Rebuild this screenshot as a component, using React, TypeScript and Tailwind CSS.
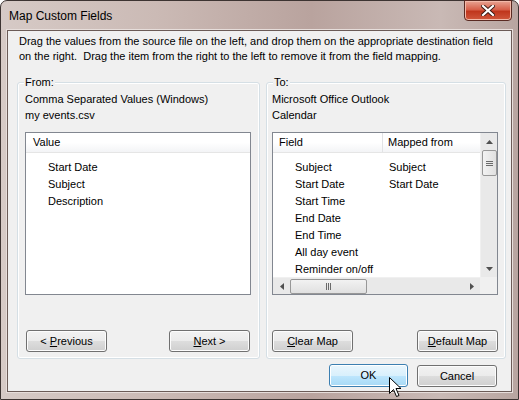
import React from "react";

const font = { fontFamily: '"Liberation Sans", Arial, sans-serif' };

function Btn({ children, className = "", primary = false }: { children: React.ReactNode; className?: string; primary?: boolean }) {
  return (
    <div
      className={
        "flex items-center justify-center rounded-[3px] border text-[11px] text-black " +
        (primary
          ? "border-[#3c7fb1] bg-[linear-gradient(#eaf6fd_0%,#d9f0fc_50%,#bee6fd_51%,#a7d9f5_100%)] shadow-[inset_0_0_0_1px_#fff]"
          : "border-[#707070] bg-[linear-gradient(#f2f2f2_0%,#ebebeb_50%,#dddddd_51%,#cfcfcf_100%)] shadow-[inset_0_0_0_1px_#fcfcfc]") +
        " " +
        className
      }
    >
      <span>{children}</span>
    </div>
  );
}

function GroupBox({ label, className = "", children }: { label: string; className?: string; children: React.ReactNode }) {
  return (
    <div className={"relative flex flex-col rounded-[3px] border border-[#d5dfe5] shadow-[inset_0_0_0_1px_#fff] " + className}>
      <span className="absolute -top-[9px] left-[6px] bg-[#f0f0f0] px-[1px] leading-[16px]">{label}</span>
      {children}
    </div>
  );
}

const fields = [
  ["Subject", "Subject"],
  ["Start Date", "Start Date"],
  ["Start Time", ""],
  ["End Date", ""],
  ["End Time", ""],
  ["All day event", ""],
  ["Reminder on/off", ""],
];

export default function App() {
  return (
    <div className="h-[400px] w-[519px] overflow-hidden bg-white" style={font}>
      <div className="relative flex h-[400px] w-[519px] flex-col rounded-t-[7px] border border-[#3d3432] bg-[linear-gradient(90deg,#d6cac6_0%,#cbbab5_30%,#b9a39e_60%,#c9b9b5_85%,#b8a5a0_100%)]">
        {/* title bar */}
        <div className="flex h-[29px] shrink-0 items-center pl-[8px] text-[12px] text-black">Map Custom Fields</div>
        <div className="absolute right-[6px] top-[-1px] flex h-[21px] w-[48px] items-center justify-center rounded-b-[4px] border border-[#5a2a22] bg-[linear-gradient(#e8a493_0%,#d7604a_45%,#c0361d_55%,#d0573c_100%)] shadow-[inset_0_0_0_1px_#f2b9a9]">
          <svg width="14" height="11" viewBox="0 0 14 11">
            <path d="M2 1 L12 10 M12 1 L2 10" stroke="#3a1a14" strokeWidth="4" strokeLinecap="square" />
            <path d="M2 1 L12 10 M12 1 L2 10" stroke="#ffffff" strokeWidth="2.2" strokeLinecap="square" />
          </svg>
        </div>

        {/* client area */}
        <div className="ml-[6px] mr-[6px] flex h-[362px] flex-col border border-[#6b5b57] bg-[#f0f0f0] text-[11px] text-black shadow-[0_0_0_1px_#e7dedb]">
          <div className="pl-[11px] pr-[8px] pt-[3px] leading-[15px]">
            Drag the values from the source file on the left, and drop them on the appropriate destination field on the right.&nbsp; Drag the item from the right to the left to remove it from the field mapping.
          </div>

          <div className="ml-[9px] mt-[18px] flex gap-[6px]">
            {/* From */}
            <GroupBox label="From:" className="h-[277px] w-[243px] pl-[7px] pr-[8px] pt-[8px]">
              <div className="leading-[16px]">Comma Separated Values (Windows)</div>
              <div className="leading-[16px]">my events.csv</div>
              <div className="mt-[9px] h-[163px] w-[226px] border border-[#828790] bg-white">
                <div className="flex h-[20px] items-center border-b border-[#e5e5e5] bg-[linear-gradient(#ffffff_0%,#ffffff_50%,#f3f4f6_100%)] pl-[7px]">Value</div>
                <div className="pt-[6px] pl-[22px] leading-[17px]">
                  <div>Start Date</div>
                  <div>Subject</div>
                  <div>Description</div>
                </div>
              </div>
              <div className="mt-[35px] flex justify-between pl-[1px] pr-[1px]">
                <Btn className="h-[22px] w-[81px]">
                  &lt; <span className="underline">P</span>revious
                </Btn>
                <Btn className="h-[22px] w-[81px]">
                  <span className="underline">N</span>ext &gt;
                </Btn>
              </div>
            </GroupBox>

            {/* To */}
            <GroupBox label="To:" className="h-[277px] w-[240px] pl-[5px] pr-[7px] pt-[8px]">
              <div className="leading-[16px]">Microsoft Office Outlook</div>
              <div className="leading-[16px]">Calendar</div>
              <div className="mt-[9px] flex h-[163px] w-[226px] flex-col border border-[#828790] bg-white">
                <div className="flex h-[144px]">
                  <div className="flex-1 overflow-hidden">
                    <div className="flex h-[20px] border-b border-[#e5e5e5] bg-[linear-gradient(#ffffff_0%,#ffffff_50%,#f3f4f6_100%)]">
                      <div className="flex w-[110px] items-center border-r border-[#e2e3e5] pl-[6px]">Field</div>
                      <div className="flex items-center whitespace-nowrap pl-[5px]">Mapped from</div>
                    </div>
                    <div className="pt-[6px] leading-[17px]">
                      {fields.map(([f, m]) => (
                        <div key={f} className="flex whitespace-nowrap">
                          <div className="w-[111px] pl-[22px]">{f}</div>
                          <div className="pl-[5px]">{m}</div>
                        </div>
                      ))}
                    </div>
                  </div>
                  {/* vertical scrollbar */}
                  <div className="flex w-[17px] flex-col items-center border-l border-[#f0f0f0] bg-[#e9e9e9]">
                    <div className="flex h-[17px] items-center justify-center">
                      <svg width="7" height="4" viewBox="0 0 7 4"><path d="M3.5 0 L7 4 L0 4 Z" fill="#505050" /></svg>
                    </div>
                    <div className="flex h-[26px] w-[15px] items-center justify-center rounded-[2px] border border-[#979797] bg-[linear-gradient(90deg,#f2f2f2,#e0e0e0)]">
                      <svg width="7" height="7" viewBox="0 0 7 7"><path d="M0 1.5 H7 M0 3.5 H7 M0 5.5 H7" stroke="#6a6a6a" strokeWidth="1" /></svg>
                    </div>
                    <div className="flex-1" />
                    <div className="flex h-[17px] items-center justify-center">
                      <svg width="7" height="4" viewBox="0 0 7 4"><path d="M0 0 L7 0 L3.5 4 Z" fill="#505050" /></svg>
                    </div>
                  </div>
                </div>
                {/* horizontal scrollbar */}
                <div className="flex h-[17px]">
                  <div className="flex flex-1 items-center border-t border-[#f0f0f0] bg-[#e9e9e9]">
                    <div className="flex w-[17px] items-center justify-center">
                      <svg width="4" height="7" viewBox="0 0 4 7"><path d="M0 3.5 L4 0 L4 7 Z" fill="#505050" /></svg>
                    </div>
                    <div className="flex h-[15px] w-[77px] items-center justify-center rounded-[2px] border border-[#979797] bg-[linear-gradient(#f2f2f2,#e0e0e0)]">
                      <svg width="7" height="7" viewBox="0 0 7 7"><path d="M1.5 0 V7 M3.5 0 V7 M5.5 0 V7" stroke="#6a6a6a" strokeWidth="1" /></svg>
                    </div>
                    <div className="flex-1" />
                    <div className="flex w-[17px] items-center justify-center">
                      <svg width="4" height="7" viewBox="0 0 4 7"><path d="M4 3.5 L0 0 L0 7 Z" fill="#505050" /></svg>
                    </div>
                  </div>
                  <div className="w-[17px] bg-[#f0f0f0]" />
                </div>
              </div>
              <div className="mt-[35px] flex justify-between">
                <Btn className="h-[22px] w-[81px]">
                  <span className="underline">C</span>lear Map
                </Btn>
                <Btn className="h-[22px] w-[81px]">
                  <span className="underline">D</span>efault Map
                </Btn>
              </div>
            </GroupBox>
          </div>

          <div className="mt-[5px] flex justify-end gap-[9px] pr-[14px]">
            <Btn primary className="h-[23px] w-[79px]">OK</Btn>
            <Btn className="mt-[1px] h-[22px] w-[80px]">Cancel</Btn>
          </div>
        </div>

        {/* mouse cursor */}
        <svg className="absolute left-[388px] top-[376px]" width="13" height="21" viewBox="0 0 13 21">
          <path d="M0.5 0.5 L0.5 16.5 L4.5 12.5 L7.5 19.5 L10 18.5 L7 11.5 L12 11.5 Z" fill="#fff" stroke="#000" strokeWidth="1" strokeLinejoin="miter" />
        </svg>
      </div>
    </div>
  );
}
